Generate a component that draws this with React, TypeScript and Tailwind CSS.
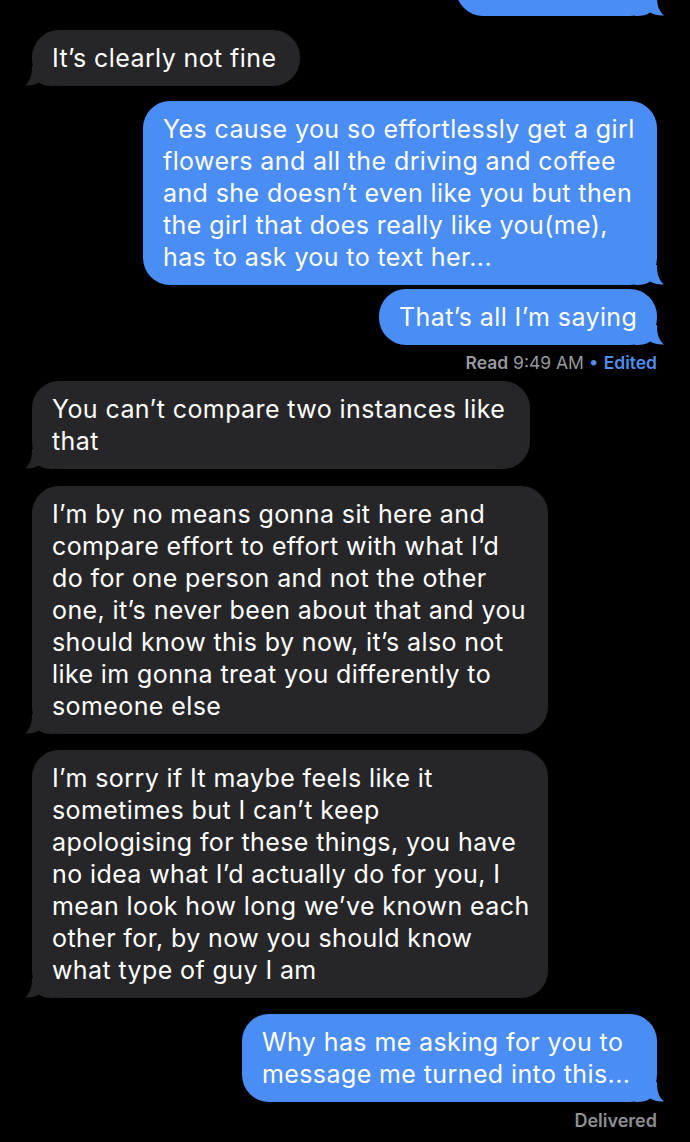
import React from "react";

type Side = "in" | "out";

function Tail({ side, color }: { side: Side; color: string }) {
  const pos = side === "in" ? "left-[-8px]" : "right-[-8px] -scale-x-100";
  return (
    <svg
      className={`absolute bottom-0 ${pos}`}
      width="30"
      height="24"
      viewBox="0 0 30 24"
      aria-hidden
    >
      <path
        d="M8 4 C8 14 6 19 1 23.5 C6 24 11 22.5 15 20.5 C17.5 22.5 21 24 30 24 L30 4 Z"
        fill={color}
      />
    </svg>
  );
}

function Bubble({
  side,
  width,
  lines,
  className = "",
}: {
  side: Side;
  width: string;
  lines: string[];
  className?: string;
}) {
  const isIn = side === "in";
  const color = isIn ? "#262628" : "#4a8df5";
  return (
    <div
      className={`relative ${width} ${
        isIn ? "self-start ml-[32px] bg-[#262628]" : "self-end mr-[33px] bg-[#4a8df5]"
      } rounded-[27px] px-[20px] py-[12px] text-white text-[25px] leading-[32px] tracking-[0.4px] ${className}`}
    >
      <Tail side={side} color={color} />
      <div className="relative whitespace-nowrap">
        {lines.map((l, i) => (
          <div key={i} className="h-[32px]">
            {l}
          </div>
        ))}
      </div>
    </div>
  );
}

export default function App() {
  return (
    <div
      className="w-[690px] h-[1142px] bg-black overflow-hidden flex flex-col"
      style={{ fontFamily: "Inter, 'Noto Sans', sans-serif" }}
    >
      {/* earlier sent message, scrolled mostly out of view */}
      <Bubble side="out" width="w-[201px]" lines={["\u00a0"]} className="mt-[-40px]" />

      <Bubble side="in" width="w-[268px]" lines={["It’s clearly not fine"]} className="mt-[14px]" />

      <Bubble
        side="out"
        width="w-[514px]"
        className="mt-[15px]"
        lines={[
          "Yes cause you so effortlessly get a girl",
          "flowers and all the driving and coffee",
          "and she doesn’t even like you but then",
          "the girl that does really like you(me),",
          "has to ask you to text her...",
        ]}
      />

      <Bubble side="out" width="w-[278px]" lines={["That’s all I’m saying"]} className="mt-[4px]" />

      <div className="self-end mr-[33px] mt-[7px] text-[17.5px] leading-[22px] text-[#9a9a9e]">
        <span className="font-semibold">Read</span> 9:49 AM{" "}
        <span className="text-[#4f8ef0]">
          • <span className="font-semibold">Edited</span>
        </span>
      </div>

      <Bubble
        side="in"
        width="w-[498px]"
        className="mt-[7px]"
        lines={["You can’t compare two instances like", "that"]}
      />

      <Bubble
        side="in"
        width="w-[516px]"
        className="mt-[17px]"
        lines={[
          "I’m by no means gonna sit here and",
          "compare effort to effort with what I’d",
          "do for one person and not the other",
          "one, it’s never been about that and you",
          "should know this by now, it’s also not",
          "like im gonna treat you differently to",
          "someone else",
        ]}
      />

      <Bubble
        side="in"
        width="w-[516px]"
        className="mt-[16px]"
        lines={[
          "I’m sorry if It maybe feels like it",
          "sometimes but I can’t keep",
          "apologising for these things, you have",
          "no idea what I’d actually do for you, I",
          "mean look how long we’ve known each",
          "other for, by now you should know",
          "what type of guy I am",
        ]}
      />

      <Bubble
        side="out"
        width="w-[415px]"
        className="mt-[16px]"
        lines={["Why has me asking for you to", "message me turned into this..."]}
      />

      <div className="self-end mr-[33px] mt-[8px] text-[18px] leading-[22px] font-semibold text-[#8e8e93]">
        Delivered
      </div>
    </div>
  );
}
